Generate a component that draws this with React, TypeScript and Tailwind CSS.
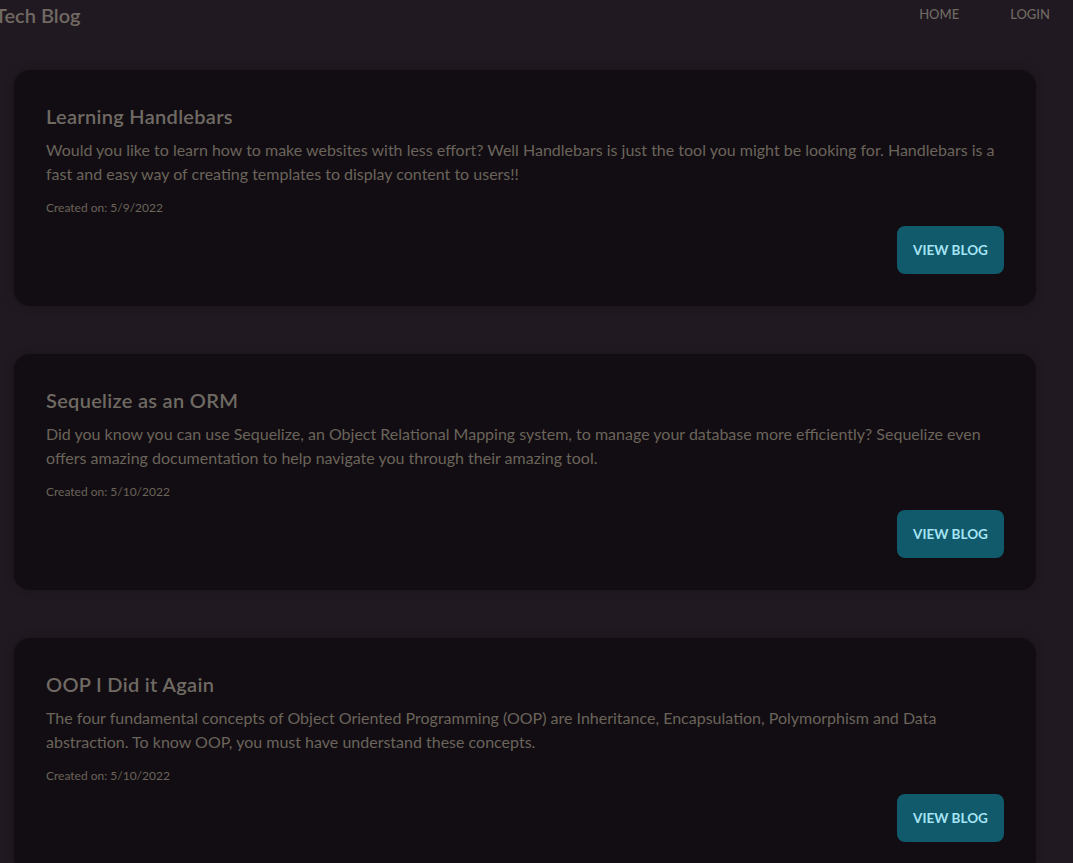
import React from 'react';

type Post = {
  title: string;
  body: string;
  created: string;
};

const posts: Post[] = [
  {
    title: 'Learning Handlebars',
    body: 'Would you like to learn how to make websites with less effort? Well Handlebars is just the tool you might be looking for. Handlebars is a fast and easy way of creating templates to display content to users!!',
    created: '5/9/2022',
  },
  {
    title: 'Sequelize as an ORM',
    body: 'Did you know you can use Sequelize, an Object Relational Mapping system, to manage your database more efficiently? Sequelize even offers amazing documentation to help navigate you through their amazing tool.',
    created: '5/10/2022',
  },
  {
    title: 'OOP I Did it Again',
    body: 'The four fundamental concepts of Object Oriented Programming (OOP) are Inheritance, Encapsulation, Polymorphism and Data abstraction. To know OOP, you must have understand these concepts.',
    created: '5/10/2022',
  },
];

const PostCard = ({ post }: { post: Post }) => (
  <div className="w-[1022px] ml-[14px] rounded-2xl bg-[#120d12] px-8 pt-[32px] pb-[32px] shadow-[0_0_10px_rgba(0,0,0,0.25)]">
    <h2 className="text-[20px] leading-7 font-semibold tracking-[0.3px] text-[#6f6a63]">{post.title}</h2>
    <p className="mt-2 text-[16px] leading-6 text-[#6a645b]">{post.body}</p>
    <p className="mt-[14px] text-[12px] leading-4 text-[#6a645b]">Created on: {post.created}</p>
    <div className="flex justify-end mt-[10px]">
      <button className="h-12 w-[107px] rounded-lg bg-[#115a6b] text-[13.5px] font-bold uppercase text-[#a6e4f5]">
        View Blog
      </button>
    </div>
  </div>
);

export default function App() {
  return (
    <div className="min-h-[863px] bg-[#211921] overflow-hidden font-[Lato,sans-serif]">
      <nav className="h-[29px] flex items-center justify-between">
        <span className="-ml-[5px] text-[20px] font-semibold text-[#706a63]">Tech Blog</span>
        <div className="flex items-center gap-[51px] pr-[23px] text-[13px] font-medium text-[#706a63]">
          <a>HOME</a>
          <a>LOGIN</a>
        </div>
      </nav>
      <main className="flex flex-col gap-[48px] pt-[41px] pb-10">
        {posts.map((post) => (
          <PostCard key={post.title} post={post} />
        ))}
      </main>
    </div>
  );
}
